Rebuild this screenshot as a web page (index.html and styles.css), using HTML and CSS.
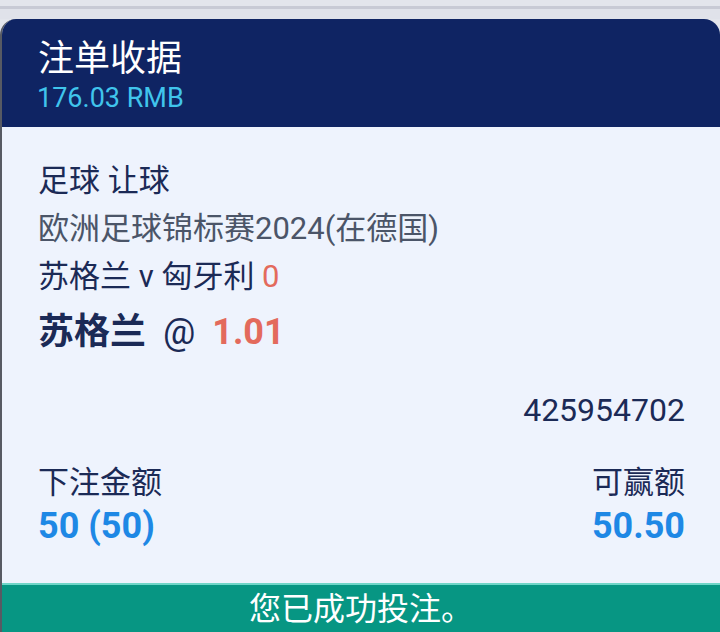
FILE: index.html
```html
<!DOCTYPE html>
<html lang="zh-CN">
<head>
    <meta charset="UTF-8">
    <meta name="viewport" content="width=device-width, initial-scale=1.0">
    <title>注单收据</title>
    <link rel="stylesheet" href="styles.css">
</head>
<body>

    <div class="top-strip"></div>

    <div class="receipt">
        <div class="receipt-header">
            <h1>注单收据</h1>
            <p class="total">176.03 RMB</p>
        </div>

        <div class="receipt-body">
            <p class="line">足球 让球</p>
            <p class="line muted">欧洲足球锦标赛2024(在德国)</p>
            <p class="line">苏格兰 v 匈牙利 <span class="hcp">0</span></p>
            <p class="selection">苏格兰 <span class="at">@</span> <span class="odds">1.01</span></p>

            <p class="ticket-id">425954702</p>

            <div class="amounts">
                <div class="amount">
                    <span class="amount-label">下注金额</span>
                    <span class="amount-value">50 (50)</span>
                </div>
                <div class="amount right">
                    <span class="amount-label">可赢额</span>
                    <span class="amount-value">50.50</span>
                </div>
            </div>
        </div>

        <div class="status">您已成功投注。</div>
    </div>

</body>
</html>
```

FILE: styles.css
```css
:root {
    --page-bg: #e3e5ec;
    --navy: #0f2463;
    --card-bg: #eef3fd;
    --text-color: #1b2a56;
    --muted-color: #4b5568;
    --cyan: #40c4ec;
    --red: #e36a5c;
    --blue: #1e88e5;
    --green: #079683;
}

html, body {
    margin: 0;
    height: 632px;
    overflow: hidden;
}

body {
    font-family: Roboto, "Noto Sans CJK SC", sans-serif;
    background-color: var(--page-bg);
    color: var(--text-color);
}

p, h1 {
    margin: 0;
}

/* 頂部的灰色條 */
.top-strip {
    height: 10px;
    margin-top: 6px;
    border-top: 3px solid #c8cad5;
    background-color: #e0e2ea;
}

.receipt {
    background-color: var(--card-bg);
    border-left: 2px solid #575a63;
    border-radius: 16px 16px 0 0;
    overflow: hidden;
    display: flex;
    flex-direction: column;
    height: 700px;
}

.receipt-header {
    background-color: var(--navy);
    height: 108px;
    box-sizing: border-box;
    padding: 17px 36px 0;
    margin-left: -1px;
}

.receipt-header h1 {
    color: #ffffff;
    font-size: 36px;
    font-weight: 400;
    line-height: 46px;
    padding-left: 1px;
}

.total {
    color: var(--cyan);
    font-size: 27px;
    line-height: 32px;
}

.receipt-body {
    padding: 30px 35px 0 36px;
}

.line {
    font-size: 31px;
    line-height: 48px;
}

.muted {
    color: var(--muted-color);
}

.hcp {
    color: var(--red);
}

.selection {
    font-size: 36px;
    font-weight: 700;
    line-height: 60px;
    margin-top: 1px;
}

.selection .at {
    font-weight: 400;
    margin: 0 8px;
}

.selection .odds {
    color: var(--red);
}

.ticket-id {
    text-align: right;
    font-size: 32px;
    line-height: 40px;
    margin-top: 28px;
}

.amounts {
    display: flex;
    justify-content: space-between;
    margin-top: 33px;
}

.amount {
    display: flex;
    flex-direction: column;
}

.amount.right {
    align-items: flex-end;
}

.amount-label {
    font-size: 31px;
    line-height: 40px;
}

.amount-value {
    color: var(--blue);
    font-size: 36px;
    font-weight: 700;
    line-height: 46px;
}

.status {
    margin-top: 34px;
    background-color: var(--green);
    border-top: 2px solid #6fd6c8;
    color: #ffffff;
    font-size: 32px;
    text-align: center;
    line-height: 48px;
    height: 60px;
}
```
